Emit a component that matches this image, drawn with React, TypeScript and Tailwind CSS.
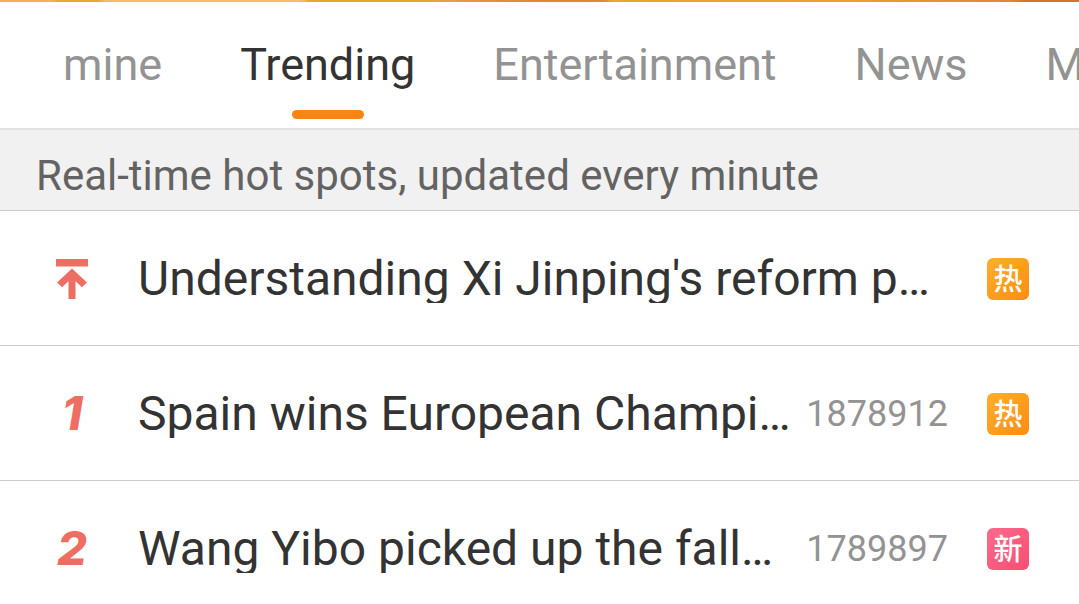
import React from 'react';

interface Topic {
    id: string;
    rank: number | null;
    title: string;
    heat?: string;
    badge: 'hot' | 'new';
}

const tabs = ['mine', 'Trending', 'Entertainment', 'News', 'Movies'];

const topics: Topic[] = [
    { id: 'top', rank: null, title: "Understanding Xi Jinping's reform p…", badge: 'hot' },
    { id: 't1', rank: 1, title: 'Spain wins European Champi…', heat: '1878912', badge: 'hot' },
    { id: 't2', rank: 2, title: 'Wang Yibo picked up the fall…', heat: '1789897', badge: 'new' },
];

const PinnedIcon: React.FC = () => (
    <svg width="34" height="42" viewBox="0 0 34 42" fill="#ed6f64">
        <path d="M1 1h32v7.5H1z" />
        <path d="M17 10.5 32 24.5l-5 4.7-6.5-6V41h-7V23.2l-6.5 6-5-4.7z" />
    </svg>
);

const Badge: React.FC<{ type: Topic['badge'] }> = ({ type }) => (
    <span
        className={`mt-px flex h-[42px] w-[42px] shrink-0 items-center justify-center rounded-[6px] pb-[2px] font-['Noto_Sans_CJK_SC',sans-serif] text-[29px] leading-none font-medium text-white ${
            type === 'hot' ? 'bg-linear-to-br from-[#fcb02a] to-[#fb8c10]' : 'bg-linear-to-br from-[#fb6a8c] to-[#f84d72]'
        }`}
    >
        {type === 'hot' ? '热' : '新'}
    </span>
);

const TopicRow: React.FC<{ topic: Topic }> = ({ topic }) => (
    <li className="flex h-[135px] shrink-0 items-center border-b border-[#cccccc] pr-[50px] pl-[40px]">
        <div className="flex w-[98px] shrink-0 justify-start">
            {topic.rank === null ? (
                <span className="mt-[2px] ml-[15px]"><PinnedIcon /></span>
            ) : (
                <span className="mb-[2px] w-[64px] text-center font-['Inter',sans-serif] text-[47px] leading-none font-extrabold text-[#ed6f64] italic">
                    {topic.rank}
                </span>
            )}
        </div>
        <p className="h-[50px] flex-1 overflow-hidden text-[48px] leading-[52px] whitespace-nowrap text-[#333333]">
            {topic.title}
        </p>
        {topic.heat && <span className="mt-[2px] mr-[39px] text-[36px] leading-none text-[#939393]">{topic.heat}</span>}
        <Badge type={topic.badge} />
    </li>
);

const App: React.FC = () => {
    const activeTab = 'Trending';

    return (
        <div className="flex h-[604px] w-[1079px] flex-col overflow-hidden bg-white font-['Roboto',sans-serif]">
            {/* Bottom edge of the banner */}
            <div className="h-[2px] shrink-0 bg-[linear-gradient(90deg,#edb44e_0px,#edb44e_52px,#e8ab2d_58px,#e8ab2d_98px,#efc068_106px,#efc068_302px,#e8a72e_308px,#e8a72e_430px,#e6a13f_440px,#dd8b2d_530px,#dd8b2d_605px,#e8a72e_612px,#e8a02e_850px,#df8a30_1010px,#dc712a_1025px,#dc712a_1079px)]" />

            <nav className="flex h-[126px] shrink-0 gap-[78px] overflow-hidden pt-[35px] pl-[63px]">
                {tabs.map(tab => (
                    <div key={tab} className="flex shrink-0 flex-col items-center">
                        <span className={`text-[45px] leading-[56px] ${tab === activeTab ? 'text-[#333333]' : 'text-[#939393]'}`}>
                            {tab}
                        </span>
                        {tab === activeTab && <div className="mt-[17px] h-[9px] w-[72px] rounded-full bg-[#f8850f]" />}
                    </div>
                ))}
            </nav>

            <div className="flex h-[83px] shrink-0 items-center border-t-2 border-b border-t-[#e2e2e2] border-b-[#cccccc] bg-[#f1f1f1] pt-[12px] pl-[36px]">
                <p className="text-[42px] leading-none whitespace-nowrap text-[#636363]">Real-time hot spots, updated every minute</p>
            </div>

            <ul>
                {topics.map(topic => (
                    <TopicRow key={topic.id} topic={topic} />
                ))}
            </ul>
        </div>
    );
};

export default App;
